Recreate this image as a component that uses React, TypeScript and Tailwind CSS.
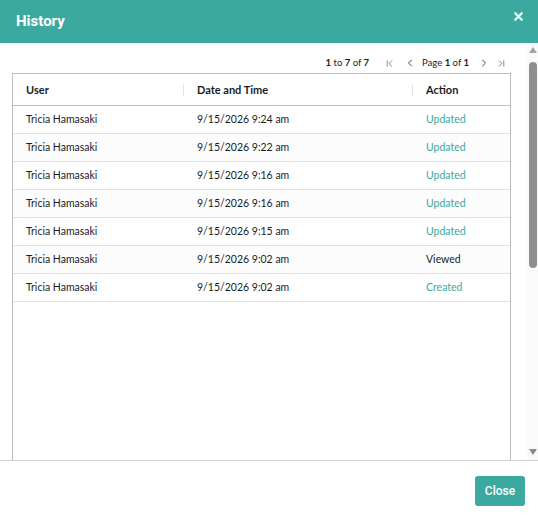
import { X, ChevronLeft, ChevronRight, ChevronFirst, ChevronLast } from "lucide-react";

interface IHistoryRow {
  user: string;
  date: string;
  action: "Updated" | "Viewed" | "Created";
}

const rows: IHistoryRow[] = [
  { user: "Tricia Hamasaki", date: "9/15/2026 9:24 am", action: "Updated" },
  { user: "Tricia Hamasaki", date: "9/15/2026 9:22 am", action: "Updated" },
  { user: "Tricia Hamasaki", date: "9/15/2026 9:16 am", action: "Updated" },
  { user: "Tricia Hamasaki", date: "9/15/2026 9:16 am", action: "Updated" },
  { user: "Tricia Hamasaki", date: "9/15/2026 9:15 am", action: "Updated" },
  { user: "Tricia Hamasaki", date: "9/15/2026 9:02 am", action: "Viewed" },
  { user: "Tricia Hamasaki", date: "9/15/2026 9:02 am", action: "Created" },
];

const Scrollbar = () => (
  <div className="flex w-[11px] shrink-0 flex-col items-center bg-[#fafafa]">
    <div className="mt-[4px] h-0 w-0 border-x-[4px] border-b-[6px] border-x-transparent border-b-[#a3a3a3]" />
    <div className="mt-[9px] h-[206px] w-[8px] rounded-full bg-[#8f8f8f]" />
    <div className="grow" />
    <div className="mb-[5px] h-0 w-0 border-x-[4px] border-t-[6px] border-x-transparent border-t-[#8a8a8a]" />
  </div>
);

const App = () => {
  return (
    <div className="flex h-[519px] w-[538px] flex-col bg-white font-['Lato',sans-serif] text-[#181d1f]">
      <div className="flex h-[43px] shrink-0 items-center justify-between bg-[#3ba99f] pl-4 pr-[13px]">
        <div className="font-['Roboto',sans-serif] text-[15px] font-bold text-white">History</div>
        <X className="mb-[10px] h-[13px] w-[13px] text-white" strokeWidth={4} />
      </div>

      <div className="flex h-[417px] shrink-0 overflow-hidden">
        <div className="flex grow flex-col pt-[9px]">
          <div className="mr-[20px] flex h-[21px] shrink-0 items-center justify-end pt-[1px] text-[9.5px] text-[#181d1f]">
            <span>
              <b className="font-bold">1</b> to <b className="font-bold">7</b> of <b className="font-bold">7</b>
            </span>
            <ChevronFirst className="ml-[15px] h-[11px] w-[11px] text-[#555]" strokeWidth={1.5} />
            <ChevronLeft className="ml-[9px] h-[12px] w-[12px] text-[#333]" strokeWidth={1.8} />
            <span className="ml-[6px]">
              Page <b className="font-bold">1</b> of <b className="font-bold">1</b>
            </span>
            <ChevronRight className="ml-[9px] h-[12px] w-[12px] text-[#333]" strokeWidth={1.8} />
            <ChevronLast className="ml-[6px] h-[11px] w-[11px] text-[#555]" strokeWidth={1.5} />
          </div>

          <div className="ml-[12px] mr-[16px] h-[420px] shrink-0 border border-[#babfc7] text-[10.5px]">
            <div className="grid h-[32px] grid-cols-[171px_229px_1fr] border-b border-[#babfc7] pt-[1px] text-[11px] font-bold">
              <div className="flex items-center justify-between pl-[13px]">
                <span>User</span>
                <span className="h-[12px] w-px bg-[#dde2eb]" />
              </div>
              <div className="flex items-center justify-between pl-[13px]">
                <span>Date and Time</span>
                <span className="h-[12px] w-px bg-[#dde2eb]" />
              </div>
              <div className="flex items-center pl-[13px]">Action</div>
            </div>
            {rows.map((row, i) => (
              <div
                key={i}
                className={`grid h-[28px] grid-cols-[171px_229px_1fr] items-center border-b border-[#dde2eb] pt-[1px] ${
                  i % 2 === 1 ? "bg-[#fcfcfc]" : "bg-white"
                }`}
              >
                <div className="pl-[13px]">{row.user}</div>
                <div className="pl-[13px]">{row.date}</div>
                <div className={`pl-[13px] ${row.action === "Viewed" ? "text-[#181d1f]" : "text-[#3ba99f]"}`}>
                  {row.action}
                </div>
              </div>
            ))}
          </div>
        </div>
        <Scrollbar />
      </div>

      <div className="flex grow items-center justify-end border-t border-[#d4d4d4] pr-[13px]">
        <button className="mt-[2px] h-[30px] w-[50px] rounded-[3px] bg-[#3ba99f] font-['Roboto',sans-serif] text-[12px] font-medium text-white">
          Close
        </button>
      </div>
    </div>
  );
};

export default App;
